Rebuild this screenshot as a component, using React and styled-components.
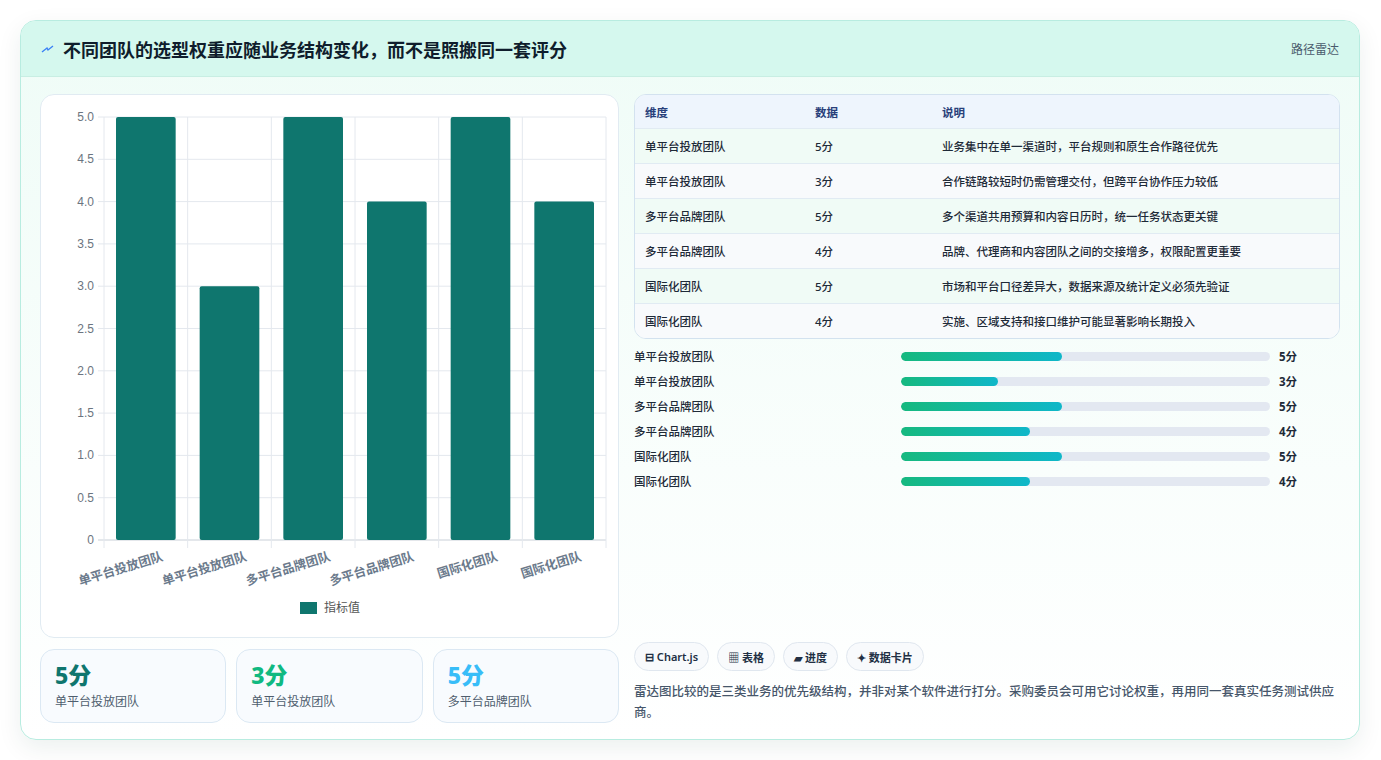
import React from "react";
import styled, { createGlobalStyle } from "styled-components";

const Global = createGlobalStyle`
  html,body{margin:0;background:#fff;font-family:"Noto Sans","Noto Sans CJK SC",sans-serif;}
  *{box-sizing:border-box;}
`;
const Page = styled.div`padding:20px 21px 20px 20px;`;
const Card = styled.div`
  border:1px solid #b8ece0;border-radius:16px;overflow:hidden;height:720px;
  background:linear-gradient(180deg,#effcf7 0%,#ffffff 100%);
  box-shadow:0 8px 24px rgba(15,60,50,0.08);
  display:flex;flex-direction:column;
`;
const Header = styled.div`
  height:56px;flex:none;display:flex;align-items:center;justify-content:space-between;
  padding:0 20px;background:#d5f8ee;border-bottom:1px solid #c8eee3;
`;
const Title = styled.h1`margin:0;font-size:18px;font-weight:700;color:#0f1d2c;display:flex;align-items:center;gap:8px;`;
const Tag = styled.span`font-size:12px;color:#4a5b6c;`;
const Body = styled.div`flex:1;display:grid;grid-template-columns:579px 1fr;gap:15px;padding:17px 19px 18px 19px;`;
const Col = styled.div`display:flex;flex-direction:column;gap:11px;min-height:0;`;
const ChartBox = styled.div`height:544px;background:#fff;border:1px solid #e1ebf2;border-radius:14px;`;
const Stats = styled.div`display:grid;grid-template-columns:repeat(3,1fr);gap:10px;`;
const Stat = styled.div`height:74px;border:1px solid #dbe8f3;border-radius:14px;background:#f8fbfe;padding:10px 14px;`;
const StatV = styled.div`font-size:23px;font-weight:800;color:${p=>p.c};line-height:30px;`;
const StatL = styled.div`font-size:12px;color:#4f5e6e;margin-top:2px;`;
const Table = styled.div`border:1px solid #d3e2ef;border-radius:12px;overflow:hidden;background:#fff;`;
const Row = styled.div`display:grid;grid-template-columns:170px 127px 1fr;height:35px;align-items:center;padding-left:10px;
  font-size:11.5px;color:#1e2a38;background:${p=>p.bg};border-top:${p=>p.first?"none":"1px solid #e1ebf3"};
  font-weight:${p=>p.head?600:500};${p=>p.head&&"color:#28407a;height:33px;"}`;
const Bars = styled.div`display:flex;flex-direction:column;gap:7px;margin-top:8px;`;
const BarRow = styled.div`display:grid;grid-template-columns:267px 369px 1fr;gap:0;align-items:center;height:18px;font-size:11.5px;color:#1e2a38;font-weight:500;`;
const Track = styled.div`height:9px;border-radius:5px;background:#e3e8f1;overflow:hidden;`;
const Fill = styled.div`height:100%;border-radius:5px;background:linear-gradient(90deg,#16b97f,#0fb7c9);`;
const Val = styled.span`padding-left:9px;font-weight:700;`;
const Spacer = styled.div`flex:1;`;
const Pills = styled.div`display:flex;gap:8px;`;
const Pill = styled.span`height:29px;padding:0 10px;border:1px solid #e0e7ef;border-radius:15px;background:#f8fafc;display:flex;align-items:center;font-size:11px;font-weight:600;color:#223044;`;
const Note = styled.p`margin:10px 0 0;font-size:12.5px;line-height:21px;color:#46566a;font-weight:500;`;

const data=[["单平台投放团队",5,"业务集中在单一渠道时，平台规则和原生合作路径优先"],["单平台投放团队",3,"合作链路较短时仍需管理交付，但跨平台协作压力较低"],["多平台品牌团队",5,"多个渠道共用预算和内容日历时，统一任务状态更关键"],["多平台品牌团队",4,"品牌、代理商和内容团队之间的交接增多，权限配置更重要"],["国际化团队",5,"市场和平台口径差异大，数据来源及统计定义必须先验证"],["国际化团队",4,"实施、区域支持和接口维护可能显著影响长期投入"]];

function Chart(){
  const L=63,R=565,T=22,B=445,w=(R-L)/6;
  const ticks=[0,0.5,1,1.5,2,2.5,3,3.5,4,4.5,5];
  const y=v=>B-(v/5)*(B-T);
  return <svg width="578" height="542">
    {ticks.map(t=><g key={t}><line x1={L-6} x2={R} y1={y(t)} y2={y(t)} stroke={t===0?"#c9d0d8":"#e4e8ee"}/>
      <text x={L-10} y={y(t)+4} textAnchor="end" fontSize="12" fill="#6b7480" fontFamily="Liberation Sans">{t===0?"0":t.toFixed(1)}</text></g>)}
    {[0,1,2,3,4,5,6].map(i=><line key={i} x1={L+i*w} x2={L+i*w} y1={T} y2={B+8} stroke="#e4e8ee"/>)}
    {data.map((d,i)=><g key={i}>
      <rect x={L+i*w+12} y={y(d[1])} width={w-24} height={B-y(d[1])} rx="2" fill="#0f766e"/>
      <text transform={`translate(${L+i*w+w/2+18},${B+20}) rotate(-17)`} textAnchor="end" fontSize="12.5" fontWeight="600" fill="#6b7a8c">{d[0]}</text>
    </g>)}
    <rect x="259" y="507" width="17" height="12" fill="#0f766e"/>
    <text x="283" y="517" fontSize="12" fill="#555">指标值</text>
  </svg>;
}

export default function App(){
  return <><Global/><Page><Card>
    <Header><Title><svg width="14" height="10" viewBox="0 0 14 10"><path d="M1 8 L6 4 L7 6 L12 2" stroke="#3b82f6" strokeWidth="1.4" fill="none"/></svg>不同团队的选型权重应随业务结构变化，而不是照搬同一套评分</Title><Tag>路径雷达</Tag></Header>
    <Body>
      <Col>
        <ChartBox><Chart/></ChartBox>
        <Stats>
          <Stat><StatV c="#0f766e">5分</StatV><StatL>单平台投放团队</StatL></Stat>
          <Stat><StatV c="#10b981">3分</StatV><StatL>单平台投放团队</StatL></Stat>
          <Stat><StatV c="#38bdf8">5分</StatV><StatL>多平台品牌团队</StatL></Stat>
        </Stats>
      </Col>
      <Col style={{gap:0}}>
        <Table>
          <Row head first bg="#eef5fd"><span>维度</span><span>数据</span><span>说明</span></Row>
          {data.map((d,i)=><Row key={i} bg={i%2?"#f8fafc":"#f0fbf6"}><span>{d[0]}</span><span>{d[1]}分</span><span>{d[2]}</span></Row>)}
        </Table>
        <Bars>{data.map((d,i)=><BarRow key={i}><span>{d[0]}</span><Track><Fill style={{width:`${d[1]*8.72}%`}}/></Track><Val>{d[1]}分</Val></BarRow>)}</Bars>
        <Spacer/>
        <Pills><Pill>⊟ Chart.js</Pill><Pill>▦ 表格</Pill><Pill>▰ 进度</Pill><Pill>✦ 数据卡片</Pill></Pills>
        <Note>雷达图比较的是三类业务的优先级结构，并非对某个软件进行打分。采购委员会可用它讨论权重，再用同一套真实任务测试供应商。</Note>
      </Col>
    </Body>
  </Card></Page></>;
}
